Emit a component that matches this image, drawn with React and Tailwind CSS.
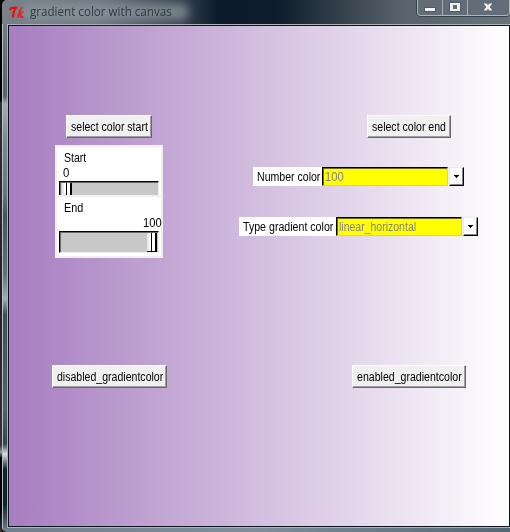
import React from 'react';

function Label({ children, className = '' }) {
  return (
    <span className={`block origin-left whitespace-pre text-[12px] leading-[16px] ${className}`}>
      {children}
    </span>
  );
}

function Button({ children, className, scale }) {
  return (
    <button className={`flex h-[23px] shrink-0 items-center border border-t-white border-l-white border-r-[#696969] border-b-[#696969] bg-[#f0f0f0] pl-[4px] text-left shadow-[inset_-1px_-1px_0_#a0a0a0] ${className}`}>
      <Label className={scale}>{children}</Label>
    </button>
  );
}

function Thumb() {
  return (
    <div className="flex h-full w-[10px] bg-white">
      <div className="w-[2px] bg-[#e8e8e8]" />
      <div className="ml-[2px] w-px bg-black" />
      <div className="ml-auto w-[2px] bg-black" />
    </div>
  );
}

function Combo({ label, value, className, labelWidth, labelScale, valueScale }) {
  return (
    <div className={`flex h-[19px] ${className}`}>
      <div className={`shrink-0 bg-white pt-[2px] pl-[4px] ${labelWidth}`}>
        <Label className={labelScale}>{label}</Label>
      </div>
      <div className="h-[19px] w-[126px] shrink-0 border border-t-black border-l-black border-r-[#e3e300] border-b-[#e3e300] bg-[#ffff00] pt-px pl-[2px] text-[#838383] shadow-[inset_1px_1px_0_#69692c]">
        <Label className={valueScale}>{value}</Label>
      </div>
      <button className="ml-px flex h-[19px] w-[15px] shrink-0 items-center justify-center border border-t-[#e9e9e9] border-l-[#e9e9e9] border-r-black border-b-black bg-white shadow-[inset_-1px_-1px_0_#858585]">
        <svg className="h-[3px] w-[5px]" viewBox="0 0 5 3" shapeRendering="crispEdges">
          <path d="M0 0H5V1H4V2H3V3H2V2H1V1H0Z" fill="#000" />
        </svg>
      </button>
    </div>
  );
}

function TitleBar() {
  return (
    <div className="flex h-[24px] shrink-0 bg-[linear-gradient(90deg,#79818a_0px,#6d7782_95px,#344150_180px,#0c1b2b_215px,#0d1c2c_275px,#39444f_345px,#59636d_400px,#69747d_510px)]">
      <svg className="mt-[6px] ml-[7px] h-[13px] w-[16px] shrink-0" viewBox="0 0 16 13" fill="none" stroke="#ff0000">
        <path d="M1 4L2 2L8.500 1.500M6.500 2C4.500 5 4 7 4 11.500" strokeWidth="2" />
        <path d="M13.500 1C11 4 10 7 9 11.500M14.500 5.500L10 8.500M11.500 8L12 11H14.500" strokeWidth="1.8" />
      </svg>
      <div className="relative mt-[1px] ml-[5px] h-[22px] w-[150px] shrink-0">
        <div className="absolute inset-x-[-9px] inset-y-[3px] rounded-full bg-[#8f989f]/75 blur-[5px]" />
        <span className="relative block origin-left scale-x-[.968] whitespace-nowrap pt-[2px] font-['Open_Sans','Noto_Sans',sans-serif] text-[12px] leading-[17px] text-[#2f3943]">gradient color with canvas</span>
      </div>
      <div className="ml-auto flex h-[16px] w-[93px] shrink-0 rounded-b-[4px] border border-t-0 border-[#adb5b9] bg-[#626d77] shadow-[0_0_0_1px_#36414a]">
        <div className="w-[25px] border-r border-[#a5adb2] pt-[8px] pl-[7px]">
          <div className="h-[3px] w-[10px] bg-[#f1f1f1] shadow-[0_0_0_1px_#4f5964]" />
        </div>
        <div className="w-[25px] border-r border-[#a5adb2] pt-[3px] pl-[7px]">
          <div className="h-[8px] w-[10px] border-x-[3px] border-y-[2px] border-[#eeeeee] shadow-[0_0_0_1px_#4f5964]" />
        </div>
        <svg className="mt-[2px] ml-[14px] h-[10px] w-[12px]" viewBox="0 0 12 10">
          <path d="M1 1H4.500L6 2.800L7.500 1H11L8.200 5L11 9H7.500L6 7.200L4.500 9H1L3.800 5Z" fill="#f2f2f2" stroke="#4f5964" strokeWidth=".7" />
        </svg>
      </div>
    </div>
  );
}

function Scales() {
  return (
    <div className="ml-[46px] h-[113px] w-[108px] shrink-0 border-2 border-[#f0f0f0] bg-white">
      <div className="h-[48px] overflow-hidden pt-[3px]">
        <Label className="ml-[7px] scale-x-[.88]">Start</Label>
        <Label className="ml-[6px] mt-[-1px] scale-x-[.95]">0</Label>
        <div className="ml-[2px] h-[22px] w-[100px] border border-t-black border-l-black border-r-[#eeeeee] border-b-[#eeeeee] bg-[#c8c8c8] pt-px pl-[2px] shadow-[inset_1px_1px_0_#696969]">
          <Thumb />
        </div>
      </div>
      <div className="h-[61px] border-t-2 border-[#f0f0f0] pt-[3px]">
        <Label className="ml-[7px] scale-x-[.9]">End</Label>
        <Label className="mt-[-1px] ml-[86px] w-[18px] scale-x-[.93]">100</Label>
        <div className="ml-[2px] flex h-[22px] w-[100px] justify-end border border-t-black border-l-black border-r-[#eeeeee] border-b-[#eeeeee] bg-[#c8c8c8] pt-px pr-px shadow-[inset_1px_1px_0_#696969]">
          <div className="border-b border-black"><Thumb /></div>
        </div>
      </div>
    </div>
  );
}

export default function App() {
  return (
    <div className="flex h-[532px] w-[510px] overflow-hidden bg-black font-['Liberation_Sans',Arial,sans-serif] text-black">
      <div className="w-[2px] shrink-0 bg-[linear-gradient(180deg,#000_0px,#000_100px,#303030_103px,#222_300px,#333_445px,#999_452px,#000_458px,#000_510px,#333_532px)]" />
      <div className="flex h-[532px] w-[508px] shrink-0 flex-col overflow-hidden rounded-tl-[5px] rounded-bl-[5px] bg-[#59656f]">
        <TitleBar />
        <div className="flex h-[504px] shrink-0">
          <div className="w-[5px] shrink-0 border-l border-[#b7c1c5] bg-[linear-gradient(180deg,#737b84_0px,#57636d_72px,#a3adb6_80px,#7d8994_115px,#647482_170px,#46545f_192px,#60717e_250px,#a0adb8_275px,#3f4e5a_290px,#52616d_385px,#35444f_420px,#dce3ea_430px,#142230_445px,#142230_480px,#66727c_504px)]" />
          <div className="w-[503px] shrink-0 border-t border-b border-l border-[#aab4b4]">
            <div className="h-[502px] w-[502px] border border-[#0c141d]">
              <main className="h-[500px] w-[500px] bg-[linear-gradient(90deg,#a880c1_10px,#ffffff)] pt-[89px]">
                <div className="flex">
                  <Button className="ml-[57px] w-[86px]" scale="scale-x-[.88]">select color start</Button>
                  <Button className="ml-[215px] w-[84px]" scale="scale-x-[.88]">select color end</Button>
                </div>
                <div className="mt-[7px] flex">
                  <Scales />
                  <div className="flex flex-col gap-[31px] pt-[22px]">
                    <Combo label="Number color" value="100" className="ml-[90px]" labelWidth="w-[69px]" labelScale="scale-x-[.88]" valueScale="scale-x-[.93]" />
                    <Combo label="Type gradient color" value="linear_horizontal" className="ml-[76px]" labelWidth="w-[97px]" labelScale="scale-x-[.885]" valueScale="scale-x-[.875]" />
                  </div>
                </div>
                <div className="mt-[107px] flex">
                  <Button className="ml-[43px] w-[115px]" scale="scale-x-[.88]">disabled_gradientcolor</Button>
                  <Button className="ml-[185px] w-[114px]" scale="scale-x-[.882]">enabled_gradientcolor</Button>
                </div>
              </main>
            </div>
          </div>
        </div>
        <div className="h-[4px] shrink-0 border-l border-[#b7c1c5] bg-[linear-gradient(90deg,#71808a,#7f8e98_50%,#566774)]" />
      </div>
    </div>
  );
}
